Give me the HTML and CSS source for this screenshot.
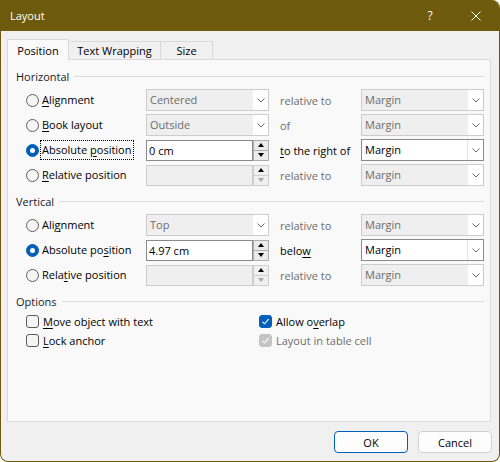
FILE: index.html
```html
<!DOCTYPE html>
<html>
<head>
<meta charset="utf-8">
<title>Layout</title>
<link rel="stylesheet" href="styles.css">
</head>
<body>
<div class="window">
  <div class="titlebar">
    <span class="title">Layout</span>
    <div class="caption">
      <span class="cbtn help">?</span>
      <span class="cbtn close"><svg width="10" height="10" viewBox="0 0 10 10"><path d="M0.5 0.5L9.5 9.5M9.5 0.5L0.5 9.5" stroke="#fff" stroke-width="1" fill="none"/></svg></span>
    </div>
  </div>
  <div class="client">
    <div class="tabs">
      <div class="tab active">Position</div>
      <div class="tab t2">Text Wrapping</div>
      <div class="tab t3">Size</div>
    </div>
    <div class="panel">
      <div class="group">Horizontal</div>
      <div class="grid">
        <div class="opt"><span class="radio"></span><span class="lbl"><u>A</u>lignment</span></div>
        <div class="combo"><span class="val">Centered</span><span class="drop"><svg width="8" height="5" viewBox="0 0 8 5"><path d="M0.5 0.5L4 4L7.5 0.5" stroke="#6a6a6a" fill="none"/></svg></span></div>
        <div class="rel">relative to</div>
        <div class="combo"><span class="val">Margin</span><span class="drop"><svg width="8" height="5" viewBox="0 0 8 5"><path d="M0.5 0.5L4 4L7.5 0.5" stroke="#6a6a6a" fill="none"/></svg></span></div>

        <div class="opt"><span class="radio"></span><span class="lbl"><u>B</u>ook layout</span></div>
        <div class="combo"><span class="val">Outside</span><span class="drop"><svg width="8" height="5" viewBox="0 0 8 5"><path d="M0.5 0.5L4 4L7.5 0.5" stroke="#6a6a6a" fill="none"/></svg></span></div>
        <div class="rel">of</div>
        <div class="combo"><span class="val">Margin</span><span class="drop"><svg width="8" height="5" viewBox="0 0 8 5"><path d="M0.5 0.5L4 4L7.5 0.5" stroke="#6a6a6a" fill="none"/></svg></span></div>

        <div class="opt"><span class="radio on"></span><span class="lbl focus">Absolute <u>p</u>osition</span></div>
        <div class="edit"><span class="field">0 cm</span><span class="spin"><span class="up"></span><span class="down"></span></span></div>
        <div class="rel en"><u>t</u>o the right of</div>
        <div class="combo en"><span class="val">Margin</span><span class="drop"><svg width="8" height="5" viewBox="0 0 8 5"><path d="M0.5 0.5L4 4L7.5 0.5" stroke="#6a6a6a" fill="none"/></svg></span></div>

        <div class="opt"><span class="radio"></span><span class="lbl"><u>R</u>elative position</span></div>
        <div class="edit dis"><span class="field"></span><span class="spin"><span class="up"></span><span class="down"></span></span></div>
        <div class="rel">relative to</div>
        <div class="combo"><span class="val">Margin</span><span class="drop"><svg width="8" height="5" viewBox="0 0 8 5"><path d="M0.5 0.5L4 4L7.5 0.5" stroke="#6a6a6a" fill="none"/></svg></span></div>
      </div>

      <div class="group">Vertical</div>
      <div class="grid">
        <div class="opt"><span class="radio"></span><span class="lbl">Ali<u>g</u>nment</span></div>
        <div class="combo"><span class="val">Top</span><span class="drop"><svg width="8" height="5" viewBox="0 0 8 5"><path d="M0.5 0.5L4 4L7.5 0.5" stroke="#6a6a6a" fill="none"/></svg></span></div>
        <div class="rel">relative to</div>
        <div class="combo"><span class="val">Margin</span><span class="drop"><svg width="8" height="5" viewBox="0 0 8 5"><path d="M0.5 0.5L4 4L7.5 0.5" stroke="#6a6a6a" fill="none"/></svg></span></div>

        <div class="opt"><span class="radio on"></span><span class="lbl">Absolute po<u>s</u>ition</span></div>
        <div class="edit"><span class="field">4.97 cm</span><span class="spin"><span class="up"></span><span class="down"></span></span></div>
        <div class="rel en">belo<u>w</u></div>
        <div class="combo en"><span class="val">Margin</span><span class="drop"><svg width="8" height="5" viewBox="0 0 8 5"><path d="M0.5 0.5L4 4L7.5 0.5" stroke="#6a6a6a" fill="none"/></svg></span></div>

        <div class="opt"><span class="radio"></span><span class="lbl">Rela<u>t</u>ive position</span></div>
        <div class="edit dis"><span class="field"></span><span class="spin"><span class="up"></span><span class="down"></span></span></div>
        <div class="rel">relative to</div>
        <div class="combo"><span class="val">Margin</span><span class="drop"><svg width="8" height="5" viewBox="0 0 8 5"><path d="M0.5 0.5L4 4L7.5 0.5" stroke="#6a6a6a" fill="none"/></svg></span></div>
      </div>

      <div class="group">Options</div>
      <div class="opts">
        <div class="chk"><span class="box"></span><span><u>M</u>ove object with text</span></div>
        <div class="chk"><span class="box on"><svg width="11" height="11" viewBox="0 0 11 11"><path d="M2.5 5.8L4.6 7.8L8.6 3.2" stroke="#fff" stroke-width="1.1" fill="none"/></svg></span><span>Allow o<u>v</u>erlap</span></div>
        <div class="chk"><span class="box"></span><span><u>L</u>ock anchor</span></div>
        <div class="chk dis"><span class="box on gray"><svg width="11" height="11" viewBox="0 0 11 11"><path d="M2.5 5.8L4.6 7.8L8.6 3.2" stroke="#fff" stroke-width="1.1" fill="none"/></svg></span><span>Layout in table cell</span></div>
      </div>
    </div>
    <div class="buttons">
      <button class="btn default">OK</button>
      <button class="btn">Cancel</button>
    </div>
  </div>
</div>
</body>
</html>
```
FILE: styles.css
```css
html, body {
  margin: 0;
  background: #ffffff;
}
body {
  font: 11px "Open Sans", "Noto Sans", sans-serif;
  color: #000;
}
u {
  text-decoration-thickness: 1px;
  text-underline-offset: 2px;
}
.window {
  width: 500px;
  height: 462px;
  box-sizing: border-box;
  border: 1px solid #6e5a0c;
  border-top: 0;
  border-radius: 0 8px 8px 8px;
  overflow: hidden;
  display: flex;
  flex-direction: column;
  background: #f0f0f0;
}
.titlebar {
  flex: none;
  height: 31px;
  background: #6e5a0c;
  color: #fff;
  display: flex;
  align-items: center;
}
.title {
  padding-left: 9px;
}
.caption {
  margin-left: auto;
  display: flex;
  height: 100%;
}
.cbtn {
  width: 46px;
  display: flex;
  align-items: center;
  justify-content: center;
}
.help {
  font-size: 12px;
}
.client {
  flex: 1;
  padding: 8px 7px 8px 6px;
  display: flex;
  flex-direction: column;
}
.tabs {
  display: flex;
  align-items: flex-end;
  height: 20px;
}
.tab {
  box-sizing: border-box;
  height: 18px;
  border: 1px solid #d9d9d9;
  border-left: 0;
  border-bottom: 0;
  background: #f0f0f0;
  display: flex;
  align-items: center;
  justify-content: center;
}
.tab.active {
  width: 62px;
  height: 21px;
  margin-bottom: -1px;
  border-left: 1px solid #d9d9d9;
  background: #f9f9f9;
  position: relative;
  z-index: 1;
}
.t2 { width: 92px; }
.t3 { width: 52px; }
.panel {
  width: 484px;
  height: 363px;
  box-sizing: border-box;
  border: 1px solid #dadada;
  background: #f9f9f9;
  padding-top: 8px;
}
.group {
  display: flex;
  align-items: center;
  height: 16px;
  padding: 0 6px 0 8px;
  color: #1b1b1b;
}
.group::after {
  content: "";
  flex: 1;
  height: 1px;
  margin-left: 5px;
  background: #dcdcdc;
}
.grid {
  display: grid;
  grid-template-columns: 120px 123px 92px 123px;
  grid-auto-rows: 22px;
  row-gap: 3px;
  align-items: center;
  margin: 5px 0 7px 18px;
}
.opt {
  display: flex;
  align-items: center;
}
.radio {
  flex: none;
  width: 13px;
  height: 13px;
  box-sizing: border-box;
  border: 1px solid #5c5c5c;
  border-radius: 50%;
  background: #f5f5f5;
}
.radio.on {
  background: #005fb8;
  border-color: #005fb8;
  display: flex;
  align-items: center;
  justify-content: center;
}
.radio.on::after {
  content: "";
  width: 5px;
  height: 5px;
  border-radius: 50%;
  background: #fff;
}
.lbl {
  margin-left: 1px;
  padding: 1px 2px 1px 1px;
  border: 1px dotted transparent;
  line-height: 16px;
  white-space: nowrap;
}
.lbl.focus {
  border-color: #000;
}
.rel {
  padding-left: 11px;
  color: #6d6d6d;
  white-space: nowrap;
}
.rel.en {
  color: #000;
}
.combo {
  height: 22px;
  box-sizing: border-box;
  border: 1px solid #cccccc;
  background: #efefef;
  color: #6d6d6d;
  display: flex;
}
.combo.en {
  border-color: #8a8a8a;
  background: #fff;
  color: #000;
}
.combo .val {
  flex: 1;
  padding-left: 3px;
  line-height: 20px;
}
.combo .drop {
  width: 15px;
  background: #fff;
  display: flex;
  align-items: center;
  justify-content: center;
}
.combo.en .drop {
  border-left: 1px solid #e3e3e3;
}
.edit {
  display: flex;
  height: 21px;
}
.field {
  flex: 1;
  box-sizing: border-box;
  border: 1px solid #8a8a8a;
  background: #fff;
  padding-left: 2px;
  line-height: 19px;
}
.edit.dis .field {
  border-color: #cccccc;
  background: #efefef;
}
.spin {
  width: 16px;
  display: flex;
  flex-direction: column;
}
.spin span {
  flex: 1;
  box-sizing: border-box;
  border: 1px solid #adadad;
  background: #ebebeb;
  display: flex;
  align-items: center;
  justify-content: center;
}
.spin span + span {
  border-top: 0;
}
.up::after {
  content: "";
  border-left: 3px solid transparent;
  border-right: 3px solid transparent;
  border-bottom: 4px solid #000;
}
.down::after {
  content: "";
  border-left: 3px solid transparent;
  border-right: 3px solid transparent;
  border-top: 4px solid #000;
}
.edit.dis .spin span {
  border-color: #cfcfcf;
  background: #f0f0f0;
}
.edit.dis .down::after {
  border-top-color: #a8a8a8;
}
.opts {
  display: grid;
  grid-template-columns: 233px auto;
  grid-auto-rows: 19px;
  align-items: center;
  margin: 3px 0 0 18px;
}
.chk {
  display: flex;
  align-items: center;
  white-space: nowrap;
}
.chk.dis {
  color: #6d6d6d;
}
.box {
  flex: none;
  width: 13px;
  height: 13px;
  box-sizing: border-box;
  border: 1px solid #5c5c5c;
  border-radius: 3px;
  background: #f5f5f5;
  margin-right: 4px;
  display: flex;
  align-items: center;
  justify-content: center;
}
.box.on {
  background: #005fb8;
  border-color: #005fb8;
}
.box.on.gray {
  background: #c4c4c4;
  border-color: #c4c4c4;
}
.buttons {
  display: flex;
  justify-content: flex-end;
  gap: 10px;
  margin-top: 9px;
}
.btn {
  width: 74px;
  height: 22px;
  box-sizing: border-box;
  padding: 0;
  border: 1px solid #d0d0d0;
  border-radius: 4px;
  background: #fdfdfd;
  font: inherit;
  color: #000;
}
.btn.default {
  border-color: #005fb8;
}
```
